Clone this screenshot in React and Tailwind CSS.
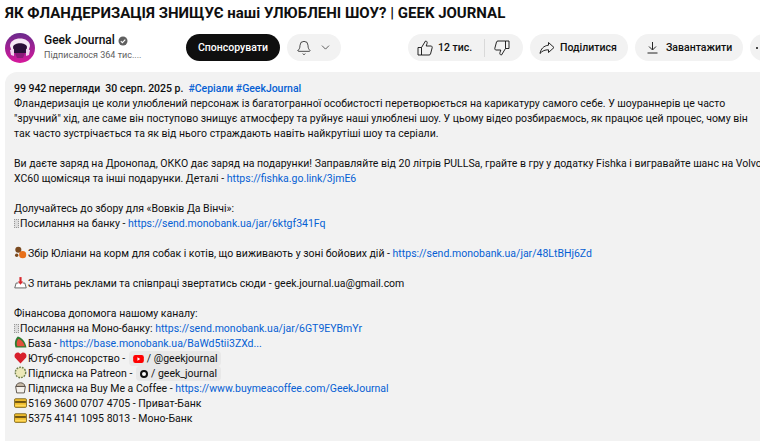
import React from 'react';
import { Bell, ChevronDown } from 'lucide-react';

const Link = ({ children }) => <span className="text-[#065fd4]">{children}</span>;

// missing-emoji box the browser draws in the original
const Tofu = () => (
  <span className="inline-block w-[5px] h-[9px] mr-[1px] border border-dotted border-[#999] bg-[#ddd] align-[-1px]" />
);

const Emoji = ({ children }) => (
  <svg viewBox="0 0 12 12" className="inline-block w-[13px] h-[13px] mr-px align-[-2px]">
    {children}
  </svg>
);

const Card = () => (
  <Emoji>
    <rect x="0.5" y="2.5" width="11" height="8" rx="1" fill="#f0bd2e" stroke="#6b5410" strokeWidth="0.7" />
    <rect x="1" y="4.6" width="10" height="1.8" fill="#6f5512" />
    <rect x="1" y="8" width="10" height="1.5" fill="#ffd95c" />
  </Emoji>
);

const Chip = ({ icon, children }) => (
  <span className="inline-flex items-center h-[15px] px-[4px] mx-px rounded bg-[#e8e8e8] align-top">
    {icon}
    {children}
  </span>
);

const Pill = ({ children, className }) => (
  <div className={`flex items-center h-[27px] rounded-full bg-[#f2f2f2] text-[10.5px] font-medium shrink-0 ${className}`}>
    {children}
  </div>
);

const ThumbUp = ({ className }) => (
  <svg viewBox="0 0 16 16" className={`w-4 h-4 ${className || ''}`} fill="none" stroke="#0f0f0f" strokeWidth="0.9" strokeLinejoin="round">
    <path d="M1 7.5 H4.5 V15 H1 Z" />
    <path d="M4.5 7.5 L8.5 1 C10 1 10.5 2.3 10 3.6 L9.2 6 H14 C15 6 15.4 7 15.1 8 L13.5 14 C13.3 14.7 12.8 15 12 15 H4.5" />
  </svg>
);

const App = () => {
  return (
    <div className="w-[760px] h-[441px] overflow-hidden bg-white text-[#0f0f0f] font-['Roboto',sans-serif]">
      <h1 className="pl-[5px] pt-[3px] text-[15px] leading-[21px] font-bold whitespace-nowrap">
        ЯК ФЛАНДЕРИЗАЦІЯ ЗНИЩУЄ наші УЛЮБЛЕНІ ШОУ? | GEEK JOURNAL
      </h1>

      <div className="flex items-center h-[27px] mt-[10px] pl-[5px]">
        <svg viewBox="0 0 30 30" className="w-[30px] h-[30px] shrink-0">
          <defs>
            <linearGradient id="avatarBg" x1="0" y1="0" x2="0" y2="1">
              <stop offset="0" stopColor="#6a2a8c" />
              <stop offset="1" stopColor="#d8189c" />
            </linearGradient>
          </defs>
          <circle cx="15" cy="15" r="15" fill="url(#avatarBg)" />
          <path d="M5 13 C5 3 25 3 25 13 L23 19 L7 19 Z" fill="#f6e8f6" />
          <path d="M8 14 C9 9 21 9 22 14 L21 20 L9 20 Z" fill="#2a0f38" />
          <path d="M5 17 L9 16 L9 23 L6 22 Z M25 17 L21 16 L21 23 L24 22 Z" fill="#f0d4ee" />
          <path d="M10 20 H20 L18 25 H12 Z" fill="#8a1a78" />
        </svg>
        <div className="ml-[9px] w-[103px] shrink-0">
          <div className="flex items-center text-[12px] leading-[15px] font-medium">
            Geek Journal
            <svg viewBox="0 0 10 10" className="w-[10px] h-[10px] ml-[3px]">
              <circle cx="5" cy="5" r="4.5" fill="#606060" />
              <path d="M2.8 5.1 L4.4 6.7 L7.3 3.6" fill="none" stroke="#fff" strokeWidth="1.1" />
            </svg>
          </div>
          <div className="text-[9px] leading-[13px] mt-px text-[#606060]">Підписалося 364 тис....</div>
        </div>
        <div className="flex items-center justify-center w-[94px] h-[27px] ml-[39px] rounded-full bg-[#0f0f0f] text-white text-[10.5px] font-medium shrink-0">
          Спонсорувати
        </div>
        <Pill className="ml-[7px] w-[54px] pl-[9px] gap-[7px]">
          <Bell size={16} strokeWidth={1.1} />
          <ChevronDown size={13} strokeWidth={1.2} />
        </Pill>
        <Pill className="ml-[67px] w-[115px] pl-[9px]">
          <ThumbUp />
          <span className="ml-[5px]">12 тис.</span>
          <span className="w-px h-[18px] ml-[12px] bg-[#d9d9d9]" />
          <ThumbUp className="ml-[9px] rotate-180" />
        </Pill>
        <Pill className="ml-[7px] w-[98px] pl-[9px]">
          <svg viewBox="0 0 16 16" className="w-4 h-4" fill="none" stroke="#0f0f0f" strokeWidth="0.9" strokeLinejoin="round">
            <path d="M9.5 2.5 L15 7.5 L9.5 12.5 V9.8 C6 9.8 3.2 10.8 1 13.5 C1.8 9 4.5 5.8 9.5 5.2 Z" />
          </svg>
          <span className="ml-[5px]">Поділитися</span>
        </Pill>
        <Pill className="ml-[7px] w-[108px] pl-[11px]">
          <svg viewBox="0 0 13 13" className="w-[13px] h-[13px]" fill="none" stroke="#0f0f0f" strokeWidth="0.9">
            <path d="M6.5 1 V8.5 M3 5.5 L6.5 9 L10 5.5 M1.5 12 H11.5" />
          </svg>
          <span className="ml-[7px]">Завантажити</span>
        </Pill>
        <Pill className="ml-[7px] w-[27px] pl-[6px] gap-[3px]">
          <span className="w-[2px] h-[2px] rounded-full bg-[#0f0f0f]" />
          <span className="w-[2px] h-[2px] rounded-full bg-[#0f0f0f]" />
          <span className="w-[2px] h-[2px] rounded-full bg-[#0f0f0f]" />
        </Pill>
      </div>

      <div className="ml-[5px] mt-[11px] w-[800px] h-[380px] pt-[9px] pl-[9px] rounded-xl bg-[#f2f2f2] text-[10.5px] leading-[15px] whitespace-nowrap">
        <div className="font-medium tracking-[-0.03px]">
          99 942 перегляди&nbsp; 30 серп. 2025 р.&nbsp; <Link>#Серіали #GeekJournal</Link>
        </div>
        <div>Фландеризація це коли улюблений персонаж із багатогранної особистості перетворюється на карикатуру самого себе. У шоураннерів це часто</div>
        <div>"зручний" хід, але саме він поступово знищує атмосферу та руйнує наші улюблені шоу. У цьому відео розбираємось, як працює цей процес, чому він</div>
        <div>так часто зустрічається та як від нього страждають навіть найкрутіші шоу та серіали.</div>
        <div className="h-[15px]" />
        <div>Ви даєте заряд на Дронопад, ОККО дає заряд на подарунки! Заправляйте від 20 літрів PULLSа, грайте в гру у додатку Fishka і вигравайте шанс на Volvo</div>
        <div>XC60 щомісяця та інші подарунки. Деталі - <Link>https://fishka.go.link/3jmE6</Link></div>
        <div className="h-[15px]" />
        <div>Долучайтесь до збору для «Вовків Да Вінчі»:</div>
        <div><Tofu />Посилання на банку - <Link>https://send.monobank.ua/jar/6ktgf341Fq</Link></div>
        <div className="h-[15px]" />
        <div>
          <Emoji>
            <circle cx="4" cy="3.5" r="2.8" fill="#7a4a20" />
            <circle cx="8" cy="8" r="3.3" fill="#e8701a" />
            <circle cx="2.5" cy="8.5" r="1.6" fill="#7a4a20" />
          </Emoji>
          Збір Юліани на корм для собак і котів, що виживають у зоні бойових дій - <Link>https://send.monobank.ua/jar/48LtBHj6Zd</Link>
        </div>
        <div className="h-[15px]" />
        <div>
          <Emoji>
            <path d="M4 6.5 H2 L0.7 11 H11.3 L10 6.5 H8" fill="#fff" stroke="#555" strokeWidth="0.8" />
            <path d="M6 1 V6" stroke="#d8262c" strokeWidth="2" />
            <path d="M3.5 5 H8.5 L6 8 Z" fill="#d8262c" />
          </Emoji>
          З питань реклами та співпраці звертатись сюди - geek.journal.ua@gmail.com
        </div>
        <div className="h-[15px]" />
        <div>Фінансова допомога нашому каналу:</div>
        <div><Tofu />Посилання на Моно-банку: <Link>https://send.monobank.ua/jar/6GT9EYBmYr</Link></div>
        <div>
          <Emoji>
            <path d="M3.5 0.5 C7 1.5 10.5 5 11.5 10.5 L1.5 10.5 C0 7 1 3 3.5 0.5 Z" fill="#2f7d32" />
            <path d="M4 2.5 C6.8 3.5 9.2 6 10 9.5 L3 9.5 C2 7 2.5 4.5 4 2.5 Z" fill="#e2503c" />
          </Emoji>
          База - <Link>https://base.monobank.ua/BaWd5tii3ZXd...</Link>
        </div>
        <div>
          <Emoji>
            <path d="M6 11.5 L0.8 6 C-0.8 2 4 -0.5 6 2.8 C8 -0.5 12.8 2 11.2 6 Z" fill="#d8202c" />
          </Emoji>
          Ютуб-спонсорство -{' '}
          <Chip icon={
            <svg viewBox="0 0 12 9" className="w-[11px] h-2 mr-[3px]">
              <rect width="12" height="9" rx="2.5" fill="#f00" />
              <path d="M4.8 2.6 L8 4.5 L4.8 6.4 Z" fill="#fff" />
            </svg>
          }>/ @geekjournal</Chip>
        </div>
        <div>
          <Emoji>
            <circle cx="6" cy="6" r="4.8" fill="#ece8b8" stroke="#6f7f4e" strokeWidth="1.3" strokeDasharray="1.6 1" />
          </Emoji>
          Підписка на Patreon -{' '}
          <Chip icon={<span className="w-2 h-2 mr-[3px] rounded-full border-2 border-[#111] bg-white" />}>/ geek_journal</Chip>
        </div>
        <div>
          <Emoji>
            <path d="M1.5 5 H10.5 L9.5 11 H2.5 Z" fill="#f4f0ea" stroke="#4c443c" strokeWidth="0.8" />
            <path d="M2 5 C2 0.5 10 0.5 10 5 Z" fill="#c9bba8" stroke="#4c443c" strokeWidth="0.8" />
          </Emoji>
          Підписка на Buy Me a Coffee - <Link>https://www.buymeacoffee.com/GeekJournal</Link>
        </div>
        <div><Card />5169 3600 0707 4705 - Приват-Банк</div>
        <div><Card />5375 4141 1095 8013 - Моно-Банк</div>
      </div>
    </div>
  );
};

export default App;
